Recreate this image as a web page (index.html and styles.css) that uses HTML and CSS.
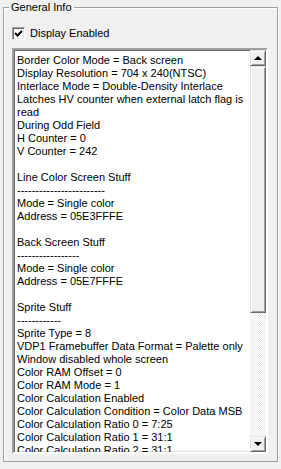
FILE: index.html
```html
<!DOCTYPE html>
<html lang="en">
<head>
  <meta charset="UTF-8">
  <title>General Info</title>
  <link rel="stylesheet" href="styles.css">
</head>
<body>
  <div class="group">
    <span class="group-title">General Info</span>
    <label class="check-row">
      <span class="check-box">
        <svg width="9" height="9" viewBox="0 0 9 9"><polyline points="1,4 3.5,6.5 8,2" fill="none" stroke="#000" stroke-width="2"/></svg>
      </span>
      Display Enabled
    </label>
    <div class="listbox">
      <div class="list-text">
        <div>Border Color Mode = Back screen</div>
        <div>Display Resolution = 704 x 240(NTSC)</div>
        <div>Interlace Mode = Double-Density Interlace</div>
        <div>Latches HV counter when external latch flag is read</div>
        <div>During Odd Field</div>
        <div>H Counter = 0</div>
        <div>V Counter = 242</div>
        <div class="blank"></div>
        <div>Line Color Screen Stuff</div>
        <div>------------------------</div>
        <div>Mode = Single color</div>
        <div>Address = 05E3FFFE</div>
        <div class="blank"></div>
        <div>Back Screen Stuff</div>
        <div>-----------------</div>
        <div>Mode = Single color</div>
        <div>Address = 05E7FFFE</div>
        <div class="blank"></div>
        <div>Sprite Stuff</div>
        <div>------------</div>
        <div>Sprite Type = 8</div>
        <div>VDP1 Framebuffer Data Format = Palette only</div>
        <div>Window disabled whole screen</div>
        <div>Color RAM Offset = 0</div>
        <div>Color RAM Mode = 1</div>
        <div>Color Calculation Enabled</div>
        <div>Color Calculation Condition = Color Data MSB</div>
        <div>Color Calculation Ratio 0 = 7:25</div>
        <div>Color Calculation Ratio 1 = 31:1</div>
        <div>Color Calculation Ratio 2 = 31:1</div>
      </div>
      <div class="scrollbar">
        <div class="sb-btn"><span class="arrow up"></span></div>
        <div class="sb-thumb"></div>
        <div class="sb-track"></div>
        <div class="sb-btn"><span class="arrow down"></span></div>
      </div>
    </div>
  </div>
</body>
</html>
```

FILE: styles.css
```css
* {
  box-sizing: border-box;
}
body {
  margin: 0;
  padding: 7px 3px 0 3px;
  background: #f0f0f0;
  color: #000;
  font-family: 'Liberation Sans', Arial, sans-serif;
  font-size: 11px;
}
.group {
  position: relative;
  width: 275px;
  height: 455px;
  border: 1px solid #a0a0a0;
  box-shadow: 1px 1px 0 #fff, inset 1px 1px 0 #fff;
  padding: 19px 8px 0 8px;
}
.group-title {
  position: absolute;
  top: -8px;
  left: 5px;
  padding: 0 2px;
  background: #f0f0f0;
  line-height: 14px;
}
.check-row {
  display: flex;
  align-items: center;
  gap: 5px;
  height: 13px;
  line-height: 13px;
}
.check-box {
  width: 13px;
  height: 13px;
  background: #fff;
  border: 1px solid;
  border-color: #a0a0a0 #fff #fff #a0a0a0;
  box-shadow: inset 1px 1px 0 #696969, inset -1px -1px 0 #e3e3e3;
  display: flex;
  align-items: center;
  justify-content: center;
}
.listbox {
  display: flex;
  margin-top: 8px;
  width: 256px;
  height: 406px;
  background: #fff;
  border: 2px solid;
  border-color: #a0a0a0 #fff #fff #a0a0a0;
  box-shadow: inset 1px 1px 0 #696969, inset -1px -1px 0 #e3e3e3;
}
.list-text {
  flex: 1;
  overflow: hidden;
  padding: 4px 2px 0 3px;
  line-height: 13px;
}
.blank {
  height: 13px;
}
.scrollbar {
  width: 16px;
  display: flex;
  flex-direction: column;
}
.sb-btn, .sb-thumb {
  background: #f0f0f0;
  border: 1px solid;
  border-color: #e3e3e3 #696969 #696969 #e3e3e3;
  box-shadow: inset 1px 1px 0 #fff, inset -1px -1px 0 #a0a0a0;
}
.sb-btn {
  height: 16px;
  display: flex;
  align-items: center;
  justify-content: center;
}
.sb-thumb {
  height: 247px;
}
.sb-track {
  flex: 1;
  background: repeating-conic-gradient(#fff 0 25%, #ececec 0 50%) 0 0 / 2px 2px;
}
.arrow {
  width: 0;
  height: 0;
  border-left: 4px solid transparent;
  border-right: 4px solid transparent;
}
.arrow.up {
  border-bottom: 4px solid #000;
}
.arrow.down {
  border-top: 4px solid #000;
}
```
